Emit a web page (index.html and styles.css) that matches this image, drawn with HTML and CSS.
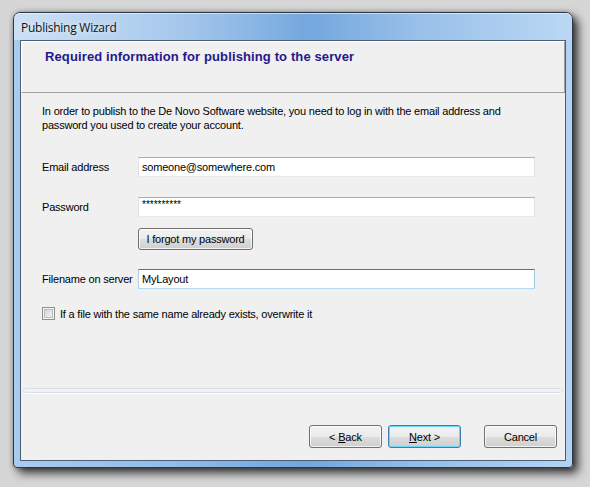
FILE: index.html
```html
<!DOCTYPE html>
<html>
<head>
<meta charset="utf-8">
<title>Publishing Wizard</title>
<link rel="stylesheet" href="styles.css">
</head>
<body>
<div class="desktop">
  <div class="window">
    <div class="titlebar"><span class="title">Publishing Wizard</span></div>
    <div class="client">
      <div class="header">
        <h1 class="heading">Required information for publishing to the server</h1>
      </div>
      <div class="content">
        <p class="intro">In order to publish to the De Novo Software website, you need to log in with the email address and<br>password you used to create your account.</p>
        <div class="row row-email">
          <span class="label">Email address</span>
          <div class="input">someone@somewhere.com</div>
        </div>
        <div class="row row-password">
          <span class="label">Password</span>
          <div class="input input-pw">**********</div>
        </div>
        <div class="row row-forgot">
          <span class="label"></span>
          <button class="btn btn-forgot">I forgot my password</button>
        </div>
        <div class="row row-file">
          <span class="label">Filename on server</span>
          <div class="input input-focus">MyLayout</div>
        </div>
        <div class="check-row">
          <span class="checkbox"></span>
          <span class="check-text">If a file with the same name already exists, overwrite it</span>
        </div>
      </div>
      <div class="footer">
        <div class="separator"></div>
        <div class="buttons">
          <button class="btn btn-nav">&lt; <u>B</u>ack</button>
          <button class="btn btn-nav btn-default"><u>N</u>ext &gt;</button>
          <button class="btn btn-nav btn-cancel">Cancel</button>
        </div>
      </div>
    </div>
  </div>
</div>
</body>
</html>
```

FILE: styles.css
```css
html, body {
  margin: 0;
  padding: 0;
}

body {
  width: 590px;
  height: 487px;
  overflow: hidden;
  background: #d6d6d6;
  font-family: "Liberation Sans", Arial, sans-serif;
  font-size: 11px;
  letter-spacing: -0.2px;
  color: #000;
}

.desktop {
  padding: 12px 0 0 13px;
}

.window {
  width: 558px;
  height: 454px;
  border: 1px solid #2e3744;
  border-radius: 7px 7px 4px 4px;
  background: linear-gradient(to right, #a9cbee 0%, #93bce8 28%, #72a6de 52%, #94bde8 72%, #b3d3f3 100%);
  box-shadow: 5px 5px 10px rgba(0, 0, 0, 0.75), 0 0 5px rgba(0, 0, 0, 0.3);
  display: flex;
  flex-direction: column;
}

.titlebar {
  height: 27px;
  flex: none;
  display: flex;
  align-items: center;
  padding-left: 7px;
  border-radius: 6px 6px 0 0;
  background: linear-gradient(to right, rgba(255, 255, 255, 0.4) 0%, rgba(255, 255, 255, 0.15) 35%, rgba(255, 255, 255, 0) 55%, rgba(255, 255, 255, 0.1) 100%);
  box-shadow: inset 0 1px 0 rgba(255, 255, 255, 0.55);
}

.title {
  font-family: "Open Sans", "Noto Sans", sans-serif;
  font-size: 12px;
  letter-spacing: -0.25px;
  color: #111;
  text-shadow: 0 0 6px rgba(255, 255, 255, 0.9);
  margin-top: 1px;
}

.client {
  box-sizing: border-box;
  height: 421px;
  margin: 0 6px;
  border: 1px solid #4b5f78;
  background: #f0f0f0;
  display: flex;
  flex-direction: column;
}

.header {
  box-sizing: border-box;
  height: 52px;
  flex: none;
  border-top: 1px solid #ffffff;
  border-left: 1px solid #ffffff;
  border-right: 1px solid #a0a0a0;
  border-bottom: 1px solid #a0a0a0;
  padding: 7px 0 0 23px;
}

.heading {
  margin: 0;
  font-family: "Liberation Sans", Arial, sans-serif;
  font-size: 13px;
  letter-spacing: 0.12px;
  line-height: 16px;
  font-weight: bold;
  color: #26188c;
}

.content {
  flex: 1;
  padding: 11px 0 0 21px;
}

.intro {
  margin: 0;
  line-height: 14px;
}

.row {
  display: flex;
  align-items: center;
}

.label {
  width: 96px;
  flex: none;
}

.row-email {
  margin-top: 25px;
}

.row-password {
  margin-top: 20px;
}

.row-forgot {
  margin-top: 11px;
}

.row-file {
  margin-top: 19px;
}

.input {
  box-sizing: border-box;
  width: 397px;
  height: 20px;
  padding: 0 3px;
  line-height: 18px;
  background: #ffffff;
  border: 1px solid;
  border-color: #abadb3 #dbdfe6 #e3e9ef #e2e3ea;
}

.input-pw {
  font-size: 10px;
  letter-spacing: 0;
  line-height: 14px;
}

.input-focus {
  border-color: #3d7bad #a4c9e3 #b7d9ed #b5cfe7;
}

.btn {
  box-sizing: border-box;
  margin: 0;
  padding: 0;
  font-family: "Liberation Sans", Arial, sans-serif;
  font-size: 11px;
  letter-spacing: -0.2px;
  color: #000;
  border: 1px solid #707070;
  border-radius: 3px;
  background: linear-gradient(to bottom, #f2f2f2 0%, #ebebeb 50%, #dddddd 50%, #cfcfcf 100%);
  box-shadow: inset 0 0 0 1px rgba(255, 255, 255, 0.75);
}

.btn u {
  text-decoration: underline;
}

.btn-forgot {
  width: 115px;
  height: 22px;
}

.check-row {
  margin-top: 18px;
  display: flex;
  align-items: center;
  height: 13px;
}

.checkbox {
  box-sizing: border-box;
  width: 13px;
  height: 13px;
  flex: none;
  border: 1px solid #8e8f8f;
  background: linear-gradient(135deg, #c9cdd3 0%, #e6e8eb 60%, #f4f4f4 100%);
  box-shadow: inset 0 0 0 1px #f4f4f4, inset 0 0 0 2px #b9bec4;
}

.check-text {
  margin-left: 5px;
}

.footer {
  flex: none;
  padding-bottom: 12px;
}

.separator {
  box-sizing: border-box;
  height: 5px;
  margin: 0 2px;
  border: 1px solid #d8dee6;
  border-radius: 3px;
  background: #f2f2f2;
  box-shadow: 0 1px 0 #ffffff;
}

.buttons {
  margin-top: 32px;
  display: flex;
  justify-content: flex-end;
  padding-right: 8px;
}

.btn-nav {
  width: 73px;
  height: 23px;
}

.btn-default {
  margin-left: 6px;
  border-color: #3c7fb1;
  box-shadow: inset 0 0 0 1px #6ad7f7;
}

.btn-cancel {
  margin-left: 23px;
}
```
